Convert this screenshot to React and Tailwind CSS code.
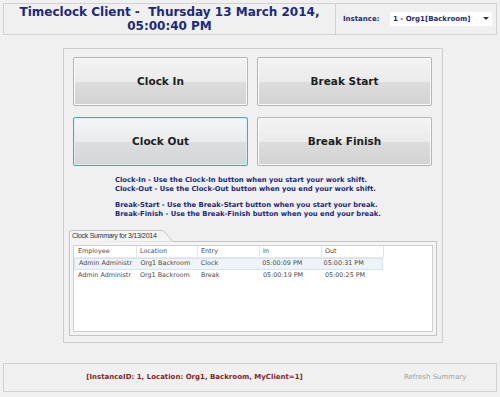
import React from "react";

const F = { fontFamily: '"DejaVu Sans", Verdana, sans-serif' };

function Btn({ label, focused }) {
  return (
    <div
      className={
        "w-[175px] h-[49px] rounded-[2px] border flex items-center justify-center text-[10.5px] font-bold text-[#1e1e1e] " +
        (focused
          ? "border-[#3fa7d6] shadow-[inset_0_0_0_1px_#dcf0f8] bg-[linear-gradient(#f3f5f6_0%,#eaecee_50%,#dcdedf_50%,#d3d5d6_100%)]"
          : "border-[#b4b4b4] shadow-[inset_0_0_0_1px_#fafafa] bg-[linear-gradient(#f3f3f3_0%,#ebebeb_50%,#dddddd_50%,#d2d2d2_100%)]")
      }
      style={F}
    >
      {label}
    </div>
  );
}

const cols = [
  { w: "w-[62px]", label: "Employee" },
  { w: "w-[61px]", label: "Location" },
  { w: "w-[62px]", label: "Entry" },
  { w: "w-[62px]", label: "In" },
  { w: "w-[62px]", label: "Out" },
];

const rows = [
  ["Admin Administr", "Org1 Backroom", "Clock", "05:00:09 PM", "05:00:31 PM"],
  ["Admin Administr", "Org1 Backroom", "Break", "05:00:19 PM", "05:00:25 PM"],
];

export default function App() {
  return (
    <div className="w-[500px] h-[397px] bg-[#f0f0f0] overflow-hidden pt-[3px]" style={F}>
      {/* Header */}
      <div className="mx-[3px] h-[32px] border border-[#d2d2d2] flex">
        <div className="w-[331px] flex flex-col items-center justify-center text-[12px] font-bold text-[#1d2a7a] leading-[14px]">
          <div className="whitespace-pre">Timeclock Client -  Thursday 13 March 2014,</div>
          <div>05:00:40 PM</div>
        </div>
        <div className="flex-1 border-l border-[#d2d2d2] flex items-center pl-[7px]">
          <span className="text-[7px] font-bold text-[#1d2a7a] w-[47px]">Instance:</span>
          <div className="w-[102px] h-[14px] bg-white flex items-center justify-between pl-[3px] pr-[3px]">
            <span className="text-[7px] font-bold text-[#1d2a7a]">1 - Org1[Backroom]</span>
            <svg width="6" height="4" viewBox="0 0 6 4"><path d="M0 0h6L3 3z" fill="#333" /></svg>
          </div>
        </div>
      </div>

      {/* Main panel */}
      <div className="ml-[63px] mt-[13px] w-[380px] h-[295px] border border-[#cdcdcd] pt-[8px] pl-[9px]">
        <div className="grid grid-cols-[175px_175px] gap-x-[9px] gap-y-[11px]">
          <Btn label="Clock In" />
          <Btn label="Break Start" />
          <Btn label="Clock Out" focused />
          <Btn label="Break Finish" />
        </div>
        <div className="ml-[42px] mt-[10px] text-[6.8px] leading-[9px] font-bold text-[#1d2a7a]">
          <div>Clock-In - Use the Clock-In button when you start your work shift.</div>
          <div>Clock-Out - Use the Clock-Out button when you end your work shift.</div>
          <div className="mt-[7px]">Break-Start - Use the Break-Start button when you start your break.</div>
          <div>Break-Finish - Use the Break-Finish button when you end your break.</div>
        </div>

        {/* Tab control */}
        <div className="mt-[11px] ml-[-4px] w-[368px]">
          <div className="relative h-[11px] w-[104px]">
            <svg className="absolute left-0 top-0" width="106" height="12" viewBox="0 0 106 12">
              <path d="M0.5 12V2.5Q0.5 0.5 2.5 0.5H94L104 11.5" fill="#f4f4f4" stroke="#c4c4c4" />
            </svg>
            <span
              className="absolute left-[3px] top-[1px] text-[7px] leading-[9px] tracking-[-0.3px] text-[#333] whitespace-nowrap"
              style={{ fontFamily: '"Liberation Sans", Arial, sans-serif' }}
            >
              Clock Summary for 3/13/2014
            </span>
          </div>
          <div className="h-[95px] border border-[#c4c4c4] bg-[#f4f4f4] p-[3px]">
            <div className="h-full border border-[#cfcfcf] bg-white pl-[1px] text-[6.4px] text-[#4a4a4a]">
              <div className="flex h-[12px] items-center border-b border-[#e8e8e8] w-[309px]">
                {cols.map((c) => (
                  <div key={c.label} className={c.w + " pl-[3px] border-r border-[#e4e4e4] h-full flex items-center"}>
                    {c.label}
                  </div>
                ))}
              </div>
              {rows.map((r, i) => (
                <div
                  key={i}
                  className={
                    "flex h-[12px] items-center w-[309px] " +
                    (i === 0 ? "bg-[#eef4fa] border border-[#d4e4f2] -ml-[1px] pl-[1px]" : "")
                  }
                >
                  {r.map((v, j) => (
                    <div key={j} className={cols[j].w + " pl-[3px] whitespace-nowrap overflow-hidden"}>
                      {v}
                    </div>
                  ))}
                </div>
              ))}
            </div>
          </div>
        </div>
      </div>

      {/* Footer */}
      <div className="mx-[3px] mt-[20px] h-[29px] border border-[#d2d2d2] flex items-center">
        <div className="w-[381px] text-center text-[7px] font-bold text-[#8a1e1e]">
          [InstanceID: 1, Location: Org1, Backroom, MyClient=1]
        </div>
        <div className="ml-[19px] text-[7px] text-[#a0a0a0]">Refresh Summary</div>
      </div>
    </div>
  );
}
